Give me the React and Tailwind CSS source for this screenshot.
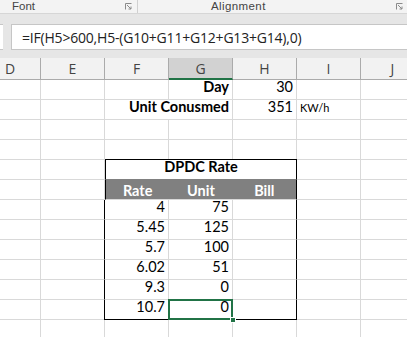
import React from 'react';

const cols = ['D', 'E', 'F', 'G', 'H', 'I', 'J'];

function Launcher() {
  return (
    <svg width="7" height="7" viewBox="0 0 7 7" className="text-[#8a8a8a]">
      <path d="M0.5 6.5V0.5H6.5" fill="none" stroke="currentColor" strokeWidth="1" />
      <path d="M2 2L6 6M6 3.5V6H3.5" fill="none" stroke="currentColor" strokeWidth="1" />
    </svg>
  );
}

function Cell({ children, className = '' }) {
  return (
    <div className={'h-[20px] border-r border-b border-[#d9d9d9] flex items-end pb-[1px] px-[3px] whitespace-nowrap ' + className}>
      {children}
    </div>
  );
}

export default function App() {
  const table = [
    ['4', '75'],
    ['5.45', '125'],
    ['5.7', '100'],
    ['6.02', '51'],
    ['9.3', '0'],
    ['10.7', '0'],
  ];

  return (
    <div className="w-[407px] h-[337px] overflow-hidden bg-white font-['Lato',sans-serif] text-black">
      {/* ribbon group labels */}
      <div className="h-[14px] bg-[#f3f3f3] border-b border-[#d6d6d6] flex text-[11.5px] leading-[13px] text-[#444] font-['Liberation_Sans',sans-serif]">
        <div className="w-[138px] border-r border-[#d0d0d0] flex justify-between items-start pl-[12px] pr-[5px]">
          <span>Font</span>
          <span className="mt-[3px]"><Launcher /></span>
        </div>
        <div className="flex-1 flex justify-between items-start pr-[4px]">
          <span className="ml-[73px] tracking-[0.4px]">Alignment</span>
          <span className="mt-[3px]"><Launcher /></span>
        </div>
      </div>

      {/* formula bar */}
      <div className="h-[44px] bg-[#e6e6e6] flex pt-[10px] pb-[8px]">
        <div className="w-[3px] bg-white border-y border-[#c6c6c6]" />
        <div className="flex-1 ml-[8px] bg-white border-y border-l border-[#c6c6c6] flex items-center pl-[10px] text-[14px] text-[#222] font-['Open_Sans',sans-serif] tracking-[-0.2px]">
          =IF(H5&gt;600,H5-(G10+G11+G12+G13+G14),0)
        </div>
      </div>

      {/* sheet grid */}
      <div className="grid grid-cols-[41px_64px_64px_64px_64px_64px_64px] grid-rows-[22px_repeat(13,20px)]">
        {cols.map((c, i) => (
          <div
            key={c}
            className={
              'h-[22px] border-b border-r flex items-center text-[14px] text-[#444] font-["Open_Sans",sans-serif] ' +
              (c === 'G'
                ? 'bg-[#d2d2d2] border-r-[#ababab] border-b-2 border-b-[#217346] justify-center'
                : 'bg-[#f2f2f2] border-[#ababab] ' + (i === 0 ? 'justify-start pl-[5px]' : 'justify-center'))
            }
          >
            {c}
          </div>
        ))}

        {/* row 4 */}
        <Cell />
        <Cell />
        <Cell />
        <Cell className="justify-end font-bold text-[14.5px]">Day</Cell>
        <Cell className="justify-end text-[14.5px]">30</Cell>
        <Cell />
        <Cell />

        {/* row 5 */}
        <Cell />
        <Cell />
        <Cell className="col-span-2 justify-end font-bold text-[14.5px]">Unit Conusmed</Cell>
        <Cell className="justify-end text-[14.5px]">351</Cell>
        <Cell className="text-[11px] pb-[3px]">KW/h</Cell>
        <Cell />

        {/* rows 6, 7 */}
        {Array.from({ length: 14 }).map((_, i) => (
          <Cell key={'e' + i} />
        ))}

        {/* row 8 */}
        <Cell />
        <Cell />
        <Cell className="col-span-3 justify-center font-bold text-[14.5px] border-r-black border-t border-t-black border-l border-l-black border-b-[#808080] -mt-[1px] h-[21px]">
          DPDC Rate
        </Cell>
        <Cell />
        <Cell />

        {/* row 9 */}
        <Cell />
        <Cell />
        <div className="col-span-3 h-[20px] grid grid-cols-3 bg-[#808080] text-white font-bold text-[14.5px] border-x border-black border-b border-b-[#d9d9d9]">
          <div className="flex items-end justify-center pb-[1px]">Rate</div>
          <div className="flex items-end justify-center pb-[1px]">Unit</div>
          <div className="flex items-end justify-center pb-[1px]">Bill</div>
        </div>
        <Cell />
        <Cell />

        {/* rows 10-15 */}
        {table.map(([rate, unit], r) => {
          const last = r === table.length - 1;
          return (
            <React.Fragment key={r}>
              <Cell />
              <Cell />
              <Cell className={'justify-end text-[14.5px] border-l border-l-black -ml-[1px] w-[65px] ' + (last ? 'border-b-black' : '')}>
                {rate}
              </Cell>
              <div className="relative">
                <Cell className={'justify-end text-[14.5px] ' + (last ? 'border-b-black' : '')}>
                  {unit}
                </Cell>
                {last && (
                  <>
                    <div className="absolute -left-[1px] -top-[1px] w-[65px] h-[21px] border-2 border-[#217346]" />
                    <div className="absolute -right-[3px] -bottom-[3px] w-[6px] h-[6px] bg-[#217346] border border-white" />
                  </>
                )}
              </div>
              <Cell className={'border-r-black ' + (last ? 'border-b-black' : '')} />
              <Cell />
              <Cell />
            </React.Fragment>
          );
        })}

        {/* row 16 */}
        {Array.from({ length: 7 }).map((_, i) => (
          <Cell key={'z' + i} />
        ))}
      </div>
    </div>
  );
}
